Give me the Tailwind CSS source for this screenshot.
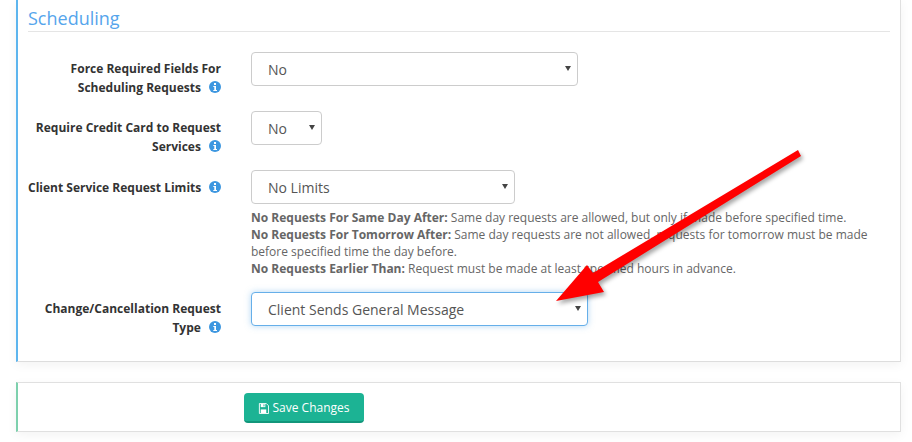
<!DOCTYPE html>
<html lang="en">
<head>
    <meta charset="UTF-8">
    <title>Scheduling</title>
    <script src="https://cdn.jsdelivr.net/npm/@tailwindcss/browser@4"></script>
</head>
<body class="relative h-[442px] overflow-hidden bg-white font-['Open_Sans',sans-serif] text-[#555]">
    <!-- Scheduling panel -->
    <section class="ml-4 h-[362px] w-[885px] border-r border-b border-l-2 border-r-[#e0e0e0] border-b-[#ddd] border-l-[#5db5ee] pl-[10px] pr-[10px] shadow-[0_3px_10px_rgba(0,0,0,0.05)]">
        <h2 class="h-[32px] border-b border-[#e5e5e5] pt-[5px] text-[18px] leading-[26px] text-[#55a5ec]">Scheduling</h2>

        <div class="mt-[20px] flex gap-[30px]">
            <label class="w-[193px] pt-[7px] text-right text-[12px] leading-[19px] font-bold text-[#333]">
                Force Required Fields For<br>Scheduling Requests
                <svg class="mb-[3px] ml-[5px] inline h-3 w-3" viewBox="0 0 12 12"><circle cx="6" cy="6" r="6" fill="#3d97e0"/><rect x="5" y="2" width="2" height="2" fill="#fff"/><path d="M4.3 5h2.7v4h1v1H4.3V9h1V6h-1z" fill="#fff"/></svg>
            </label>
            <div class="relative h-[34px] w-[327px]">
                <select class="h-full w-full appearance-none rounded border border-[#ccc] bg-white pl-4 text-[14px] text-[#555]"><option>No</option></select>
                <svg class="pointer-events-none absolute top-[14px] right-[7px] h-[5px] w-[6px]" viewBox="0 0 6 5"><path d="M0 0h6L3 5z" fill="#444"/></svg>
            </div>
        </div>

        <div class="mt-[14px] flex gap-[30px]">
            <label class="w-[193px] pt-[7px] text-right text-[12px] leading-[19px] font-bold text-[#333]">
                Require Credit Card to Request Services
                <svg class="mb-[3px] ml-[5px] inline h-3 w-3" viewBox="0 0 12 12"><circle cx="6" cy="6" r="6" fill="#3d97e0"/><rect x="5" y="2" width="2" height="2" fill="#fff"/><path d="M4.3 5h2.7v4h1v1H4.3V9h1V6h-1z" fill="#fff"/></svg>
            </label>
            <div class="relative h-[34px] w-[71px]">
                <select class="h-full w-full appearance-none rounded border border-[#ccc] bg-white pl-4 text-[14px] text-[#555]"><option>No</option></select>
                <svg class="pointer-events-none absolute top-[14px] right-[7px] h-[5px] w-[6px]" viewBox="0 0 6 5"><path d="M0 0h6L3 5z" fill="#444"/></svg>
            </div>
        </div>

        <div class="mt-[14px] flex gap-[30px]">
            <label class="w-[193px] pt-[8px] text-right text-[12px] leading-[19px] font-bold whitespace-nowrap text-[#333]">
                Client Service Request Limits
                <svg class="mb-[3px] ml-[5px] inline h-3 w-3" viewBox="0 0 12 12"><circle cx="6" cy="6" r="6" fill="#3d97e0"/><rect x="5" y="2" width="2" height="2" fill="#fff"/><path d="M4.3 5h2.7v4h1v1H4.3V9h1V6h-1z" fill="#fff"/></svg>
            </label>
            <div class="flex-1">
                <div class="relative h-[34px] w-[264px]">
                    <select class="h-full w-full appearance-none rounded border border-[#ccc] bg-white pl-4 text-[14px] text-[#555]"><option>No Limits</option></select>
                    <svg class="pointer-events-none absolute top-[14px] right-[7px] h-[5px] w-[6px]" viewBox="0 0 6 5"><path d="M0 0h6L3 5z" fill="#444"/></svg>
                </div>
                <p class="mt-[5px] text-[12px] leading-[17px] text-[#666]">
                    <b>No Requests For Same Day After:</b> Same day requests are allowed, but only if made before specified time.<br>
                    <b>No Requests For Tomorrow After:</b> Same day requests are not allowed, requests for tomorrow must be made before specified time the day before.<br>
                    <b>No Requests Earlier Than:</b> Request must be made at least specified hours in advance.
                </p>
            </div>
        </div>

        <div class="mt-[15px] flex gap-[30px]">
            <label class="w-[193px] pt-[7px] text-right text-[12px] leading-[19px] font-bold text-[#333]">
                Change/Cancellation Request Type
                <svg class="mb-[3px] ml-[5px] inline h-3 w-3" viewBox="0 0 12 12"><circle cx="6" cy="6" r="6" fill="#3d97e0"/><rect x="5" y="2" width="2" height="2" fill="#fff"/><path d="M4.3 5h2.7v4h1v1H4.3V9h1V6h-1z" fill="#fff"/></svg>
            </label>
            <div class="relative h-[34px] w-[337px]">
                <select class="h-full w-full appearance-none rounded border border-[#66afe9] bg-white pl-4 text-[14px] text-[#555] shadow-[0_0_6px_rgba(102,175,233,0.5)]"><option>Client Sends General Message</option></select>
                <svg class="pointer-events-none absolute top-[14px] right-[7px] h-[5px] w-[6px]" viewBox="0 0 6 5"><path d="M0 0h6L3 5z" fill="#444"/></svg>
            </div>
        </div>
    </section>

    <!-- Save bar -->
    <section class="mt-[20px] ml-4 flex h-[50px] w-[885px] items-center border border-l-2 border-[#e0e0e0] border-l-[#7dd0ad] pt-[2px] pl-[226px] shadow-[0_3px_10px_rgba(0,0,0,0.05)]">
        <button class="flex h-[30px] w-[120px] items-center justify-center gap-[3px] rounded border-b-2 border-[#12967b] bg-[#1cb394] pt-[2px] text-[12px] text-white">
            <svg class="h-[11px] w-[11px]" viewBox="0 0 12 12" fill="none"><path d="M1.5.5h7.5l2.5 2.5v8.5h-10z" fill="none" stroke="#fff"/><rect x="3" y="1" width="5" height="3.5" fill="#fff"/><rect x="6" y="1.5" width="1" height="2.2" fill="#1cb394"/><rect x="3" y="7" width="6" height="4" fill="#fff"/></svg>
            Save Changes
        </button>
    </section>

    <!-- Annotation arrow drawn over the screenshot -->
    <svg class="absolute top-0 left-0 h-[442px] w-[912px] drop-shadow-[2px_3px_2px_rgba(0,0,0,0.35)]" viewBox="0 0 912 442">
        <path d="M798 150 L801 156 L598 282 L604 292 L556 301 L587 265 L593 273 Z" fill="#ff0000"/>
    </svg>
</body>
</html>
